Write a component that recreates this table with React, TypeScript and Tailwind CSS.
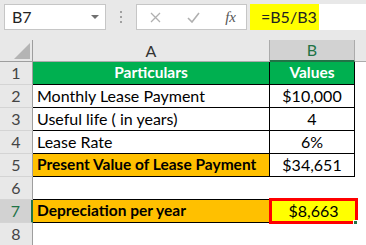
const font = { fontFamily: "Lato, 'Open Sans', sans-serif" };

function RowHead({ n, active }: { n: number; active?: boolean }) {
  return (
    <div
      className={`w-[33px] h-[23px] shrink-0 flex items-center justify-center text-[16px] text-[#444] border-b border-[#d4d4d4] ${
        active ? "bg-[#d2d2d2] border-r-2 border-r-[#217346] text-[#217346]" : "bg-[#e8e8e8] border-r border-r-[#9e9e9e]"
      }`}
    >
      {n}
    </div>
  );
}

export default function App() {
  return (
    <div className="w-[366px] h-[245px] overflow-hidden bg-white text-black" style={font}>
      {/* formula bar */}
      <div className="h-[40px] bg-[#e8e8e8] flex items-start pt-[4px] pl-[4px]">
        <div className="w-[102px] h-[26px] bg-white border border-[#c6c6c6] flex items-center justify-between pl-[7px] pr-[6px]">
          <span className="text-[16px] text-[#222]">B7</span>
          <svg width="8" height="5" viewBox="0 0 8 5">
            <path d="M0 0 L8 0 L4 4 Z" fill="#707070" />
          </svg>
        </div>
        <div className="w-[30px] h-[26px] flex flex-col items-center justify-center gap-[3px]">
          <span className="w-[2px] h-[2px] bg-[#a0a0a0]" />
          <span className="w-[2px] h-[2px] bg-[#a0a0a0]" />
          <span className="w-[2px] h-[2px] bg-[#a0a0a0]" />
        </div>
        <div className="w-[111px] h-[26px] bg-white border border-[#c6c6c6] flex items-center justify-between pl-[13px] pr-[10px]">
          <svg width="11" height="11" viewBox="0 0 11 11">
            <path d="M1 1 L10 10 M10 1 L1 10" stroke="#b0b0b0" strokeWidth="1.3" />
          </svg>
          <svg width="13" height="11" viewBox="0 0 13 11">
            <path d="M1 6 L5 10 L12 1" stroke="#b0b0b0" strokeWidth="1.6" fill="none" />
          </svg>
          <span className="text-[15px] italic text-[#555]" style={{ fontFamily: "'Liberation Serif', serif" }}>
            fx
          </span>
        </div>
        <div className="ml-[3px] flex-1 h-[26px] bg-white flex items-center">
          <div className="w-[69px] h-full bg-[#ffff00] flex items-center pl-[11px] text-[16px] text-[#222]">=B5/B3</div>
        </div>
      </div>

      {/* column headers */}
      <div className="flex h-[22px]">
        <div className="w-[33px] shrink-0 bg-[#e8e8e8] border-r border-b border-[#9e9e9e] relative">
          <svg className="absolute left-0 top-0" width="32" height="21" viewBox="0 0 32 21">
            <path d="M30 3 L30 19 L14 19 Z" fill="#b4b4b4" />
          </svg>
        </div>
        <div className="w-[237px] shrink-0 bg-[#e8e8e8] border-r border-b border-[#ababab] flex items-center justify-center text-[16px] text-[#333]">
          A
        </div>
        <div className="w-[85px] shrink-0 bg-[#d2d2d2] border-r border-[#ababab] border-b-2 border-b-[#217346] flex items-center justify-center text-[16px] text-[#217346]">
          B
        </div>
        <div className="flex-1 bg-[#e8e8e8] border-b border-[#ababab]" />
      </div>

      {/* row 1 */}
      <div className="flex">
        <RowHead n={1} />
        <div className="w-[237px] h-[23px] bg-[#00b050] border-r border-b border-black flex items-center justify-center text-white font-bold text-[15.5px]">
          Particulars
        </div>
        <div className="w-[85px] h-[23px] bg-[#00b050] border-r border-b border-black flex items-center justify-center text-white font-bold text-[15.5px]">
          Values
        </div>
      </div>

      {[
        ["Monthly Lease Payment", "$10,000"],
        ["Useful life ( in years)", "4"],
        ["Lease Rate", "6%"],
      ].map(([a, b], i) => (
        <div className="flex" key={a}>
          <RowHead n={i + 2} />
          <div className="w-[237px] h-[23px] border-r border-b border-black flex items-center pl-[4px] text-[16px]">{a}</div>
          <div className="w-[85px] h-[23px] border-r border-b border-black flex items-center justify-center text-[16px]">{b}</div>
        </div>
      ))}

      {/* row 5 */}
      <div className="flex">
        <RowHead n={5} />
        <div className="w-[237px] h-[23px] bg-[#ffc000] border-r border-b border-black flex items-center pl-[4px] font-bold text-[15.5px]">
          Present Value of Lease Payment
        </div>
        <div className="w-[85px] h-[23px] border-r border-b border-black flex items-center justify-center text-[16px]">$34,651</div>
      </div>

      {/* row 6 */}
      <div className="flex">
        <RowHead n={6} />
      </div>

      {/* row 7 */}
      <div className="flex relative">
        <RowHead n={7} active />
        <div className="w-[237px] h-[24px] bg-[#ffc000] border-t border-b border-black -mt-px flex items-center pl-[4px] font-bold text-[15.5px]">
          Depreciation per year
        </div>
        <div className="w-[89px] h-[26px] -ml-px -mt-[2px] -mb-px bg-[#ffff00] border-[3px] border-[#ff0000] flex items-center justify-center text-[16px]">
          $8,663
        </div>
        <span className="absolute left-[353px] top-[20px] w-[5px] h-[5px] bg-[#217346] border border-white" />
      </div>

      {/* row 8 */}
      <div className="flex">
        <RowHead n={8} />
      </div>
    </div>
  );
}
